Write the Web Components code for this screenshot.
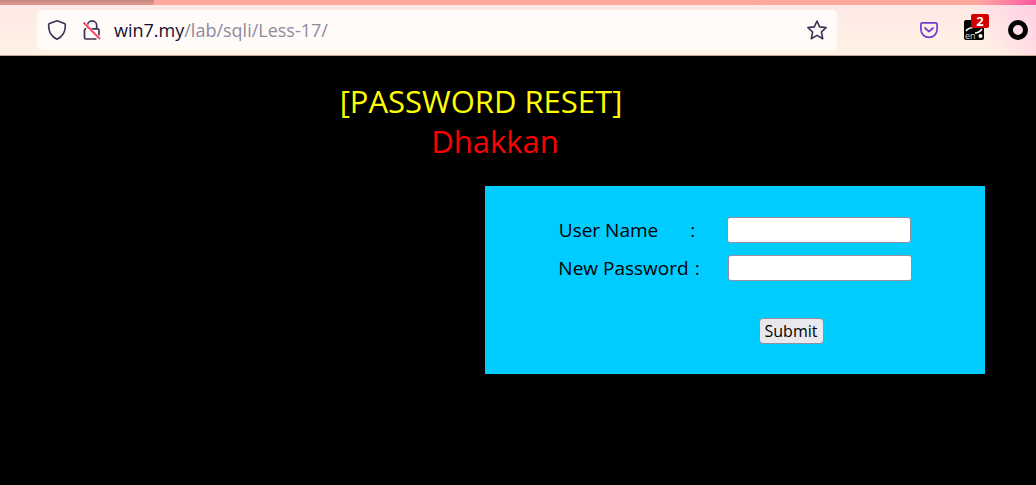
<!DOCTYPE html>
<html lang="en">
<head>
<meta charset="utf-8">
<meta name="viewport" content="width=device-width, initial-scale=1">
<title>Password reset</title>
<style>
html, body { margin: 0; min-height: 100%; background: #000; }
body { font-family: "Open Sans", "Noto Sans", sans-serif; }
</style>
</head>
<body>
<browser-bar></browser-bar>
<page-heading>
  <span slot="title">[PASSWORD RESET]</span>
  <span slot="name">Dhakkan</span>
</page-heading>
<reset-form></reset-form>

<script>
customElements.define('browser-bar', class extends HTMLElement {
  constructor() {
    super();
    this.attachShadow({ mode: 'open' }).innerHTML = `
<style>
:host { display: block; }
* { box-sizing: border-box; }
.tabs { height: 5px; display: flex; justify-content: space-between;
  background: linear-gradient(90deg, #ffa8a0 0 50%, #ffa79c 94%, #ff9fa0 95%, #fb59a0); }
.tab { width: 154px; background: linear-gradient(#c98680, #e39a92); border-radius: 0 0 3px 0; }
.bar { height: 51px; padding: 5px 8px 0 37px; display: flex; align-items: flex-start;
  border-bottom: 1px solid #c4a497;
  background: linear-gradient(65deg, transparent calc(100% - 62px), #ffd0e4 100%), linear-gradient(#ffe9e6, #fff2e4); }
.url { flex: 1; min-width: 0; height: 40px; border-radius: 5px; background: #fffbf9;
  display: flex; align-items: center; padding: 0 8px; }
svg { display: block; flex: none; }
.shield { margin: 0 12px 0 0; }
.lock { margin-right: 13px; }
.addr { flex: 1; font-size: 18px; line-height: 24px; color: #8f8a9d; white-space: nowrap; text-decoration: none; }
.addr b { font-weight: 400; color: #15102e; }
button { all: unset; display: block; flex: none; }
.tools { display: flex; height: 40px; align-items: center; margin-left: 81px; gap: 24px; }
.ext { position: relative; }
.badge { position: absolute; left: 7px; top: -6px; width: 18px; height: 14px; border-radius: 2px;
  background: #d00000; color: #fff; font-size: 13px; line-height: 14px; font-weight: 700; text-align: center; }
.en { position: absolute; left: 1px; bottom: 0; font-size: 9px; line-height: 9px; color: #ddd; }
</style>
<div class="tabs"><div class="tab"></div></div>
<div class="bar">
  <div class="url">
    <svg class="shield" width="24" height="24" viewBox="0 0 24 24" fill="none" stroke="#3b3055" stroke-width="1.6" stroke-linejoin="round"><path d="M12 2.8 L19.4 5.6 Q20.4 6 20.4 7.1 C20.4 13.5 17.5 19 12 21.2 C6.500 19 3.600 13.500 3.600 7.100 Q3.600 6 4.600 5.600 Z"/></svg>
    <svg class="lock" width="20" height="24" viewBox="0 0 20 24" fill="none"><path d="M6.500 10.500V7.500a4.600 4.600 0 0 1 9.200 0v3M5 10.800Q3.500 10.800 3.500 12.300V19.500q0 1.500 1.500 1.500H15.500M8 10.800h8.500q1.500 0 1.500 1.500V17.500" stroke="#3b3055" stroke-width="1.700"/><path d="M2.500 4.500L19 21" stroke="#fffbf9" stroke-width="3"/><path d="M2.500 4.500L19 21" stroke="#f5405f" stroke-width="1.800"/></svg>
    <a class="addr" href="#"><b>win7.my</b>/lab/sqli/Less-17/</a>
    <button type="button" aria-label="Bookmark"><svg width="24" height="24" viewBox="0 0 24 24" fill="none" stroke="#3b3055" stroke-width="1.600" stroke-linejoin="round"><path d="M12 3L14.700 8.900L21.100 9.600L16.400 14L17.700 20.700L12 17.400L6.300 20.700L7.600 14L2.900 9.600L9.300 8.900Z"/></svg></button>
  </div>
  <div class="tools">
    <button type="button" aria-label="Pocket"><svg width="22" height="22" viewBox="0 0 22 22" fill="none" stroke="#6b3fd0" stroke-width="1.700" stroke-linecap="round" stroke-linejoin="round"><path d="M4.200 3.800H17.800Q19.100 3.800 19.100 5.100V10.300A8.050 8.050 0 0 1 2.900 10.300V5.100Q2.900 3.800 4.200 3.800ZM7 9L11 12.600L15 9"/></svg></button>
    <button type="button" class="ext" aria-label="Translate"><svg width="20" height="20" viewBox="0 0 20 20"><rect width="20" height="20" rx="2"/><path d="M2 11Q4 8 9 7.500M11 13Q15 13 18 9" stroke="#fff" stroke-width="1.500" fill="none"/><circle cx="16.500" cy="16" r="2" fill="#fff"/></svg><span class="en">en</span><span class="badge">2</span></button>
    <button type="button" aria-label="Extension"><svg width="20" height="20" viewBox="0 0 20 20"><circle cx="10" cy="10" r="7.500" fill="none" stroke="#000" stroke-width="5"/></svg></button>
  </div>
</div>`;
  }
});

customElements.define('page-heading', class extends HTMLElement {
  constructor() {
    super();
    this.attachShadow({ mode: 'open' }).innerHTML = `
<style>
:host { display: block; padding-top: 25px; text-align: center; font-size: 31px; line-height: 40px; }
h1 { margin: 0; font: inherit; color: #ff0; padding-right: 74px; }
p { margin: 0; color: #f00; padding-right: 46px; }
</style>
<h1><slot name="title"></slot></h1>
<p><slot name="name"></slot></p>`;
  }
});

customElements.define('form-row', class extends HTMLElement {
  constructor() {
    super();
    const type = this.getAttribute('type') || 'text';
    this.attachShadow({ mode: 'open' }).innerHTML = `
<style>
:host { display: flex; justify-content: center; align-items: center; gap: var(--gap, 28px); }
label { display: flex; gap: var(--colon-gap, 6px); font-size: 19px; line-height: 26px; white-space: nowrap; }
input { box-sizing: border-box; width: 184px; height: 26px; margin: 0; padding: 0 4px;
  border: 1px solid #8f8f9d; border-radius: 3px; background: #fff; font: inherit; font-size: 16px; }
</style>
<label for="field"><slot></slot><span>:</span></label>
<input id="field" type="${type}">`;
  }
});

customElements.define('reset-form', class extends HTMLElement {
  constructor() {
    super();
    this.attachShadow({ mode: 'open' }).innerHTML = `
<style>
:host { display: block; padding: 25px 51px 0 0; }
form { box-sizing: border-box; width: 500px; max-width: 100%; margin-left: auto; padding: 31px 0 30px;
  background: #0cf; display: flex; flex-direction: column; gap: 12px; color: #000; }
.user { --gap: 32px; --colon-gap: 32px; }
button { align-self: center; margin: 25px 0 0 112px; width: 65px; height: 26px; padding: 0;
  border: 1px solid #8f8f9d; border-radius: 4px; background: #e9e9ed; color: #000;
  font: inherit; font-size: 16px; line-height: 24px; white-space: nowrap; }
</style>
<form onsubmit="return false">
  <form-row class="user">User Name</form-row>
  <form-row type="password">New Password</form-row>
  <button type="submit">Submit</button>
</form>`;
  }
});
</script>
</body>
</html>
